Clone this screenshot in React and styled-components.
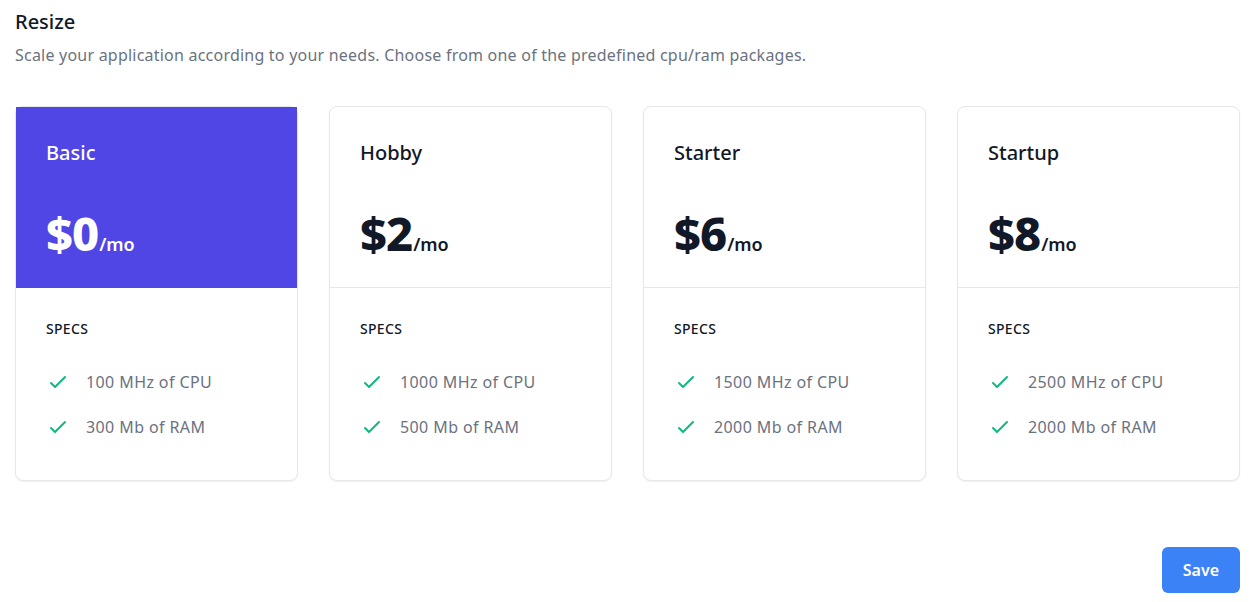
import React from 'react';
import styled, { createGlobalStyle } from 'styled-components';

const GlobalStyle = createGlobalStyle`
    * { box-sizing: border-box; }
    body {
        margin: 0;
        background: #ffffff;
        font-family: "Noto Sans", "Open Sans", Arial, sans-serif;
        color: #111827;
    }
`;

const Page = styled.div`
    padding: 6px 18px 10px 15px;
`;

const Title = styled.h2`
    margin: 0;
    font-size: 20px;
    line-height: 32px;
    font-weight: 500;
    color: #111827;
`;

const Subtitle = styled.p`
    margin: 2px 0 0;
    font-size: 16px;
    line-height: 30px;
    letter-spacing: 0.22px;
    color: #6b7280;
`;

const Plans = styled.div`
    display: grid;
    grid-template-columns: repeat(4, 1fr);
    gap: 31px;
    margin-top: 36px;
`;

const Card = styled.div`
    border: 1px solid #e5e7eb;
    border-radius: 8px;
    background: #fff;
    box-shadow: 0 1px 2px rgba(0, 0, 0, 0.06);
    display: flex;
    flex-direction: column;
`;

const Header = styled.div`
    padding: 32px 30px 30px;
    height: 181px;
    background: ${(p) => (p.$active ? '#4f46e5' : 'transparent')};
    color: ${(p) => (p.$active ? '#ffffff' : '#111827')};
    border-bottom: 1px solid ${(p) => (p.$active ? '#4f46e5' : '#e5e7eb')};
    display: flex;
    flex-direction: column;
    justify-content: space-between;
`;

const PlanName = styled.h3`
    margin: 0;
    font-size: 20px;
    line-height: 28px;
    font-weight: 500;
`;

const Price = styled.p`
    margin: 0;
    display: flex;
    align-items: baseline;
    line-height: 1;
`;

const Amount = styled.span`
    font-size: 47px;
    font-weight: 800;
    letter-spacing: -1px;
`;

const Per = styled.span`
    font-size: 18px;
    font-weight: 600;
    margin-left: 1px;
`;

const Body = styled.div`
    padding: 31px 30px 41px;
`;

const SpecsLabel = styled.h4`
    margin: 0;
    font-size: 14px;
    line-height: 20px;
    font-weight: 500;
    letter-spacing: 0.3px;
    text-transform: uppercase;
    color: #111827;
`;

const FeatureList = styled.ul`
    list-style: none;
    margin: 31px 0 0;
    padding: 0;
    display: flex;
    flex-direction: column;
    gap: 21px;
`;

const Feature = styled.li`
    display: flex;
    align-items: center;
    gap: 16px;
    font-size: 16px;
    line-height: 24px;
    letter-spacing: 0.4px;
    color: #6b7280;
`;

const Footer = styled.div`
    display: flex;
    justify-content: flex-end;
    margin-top: 66px;
`;

const SaveButton = styled.button`
    border: none;
    border-radius: 6px;
    background: #3b82f6;
    color: #fff;
    font-family: inherit;
    font-size: 16px;
    font-weight: 600;
    height: 46px;
    padding: 0 21px;
    cursor: pointer;
`;

const Check = () => (
    <svg width="24" height="24" viewBox="0 0 24 24" fill="none" stroke="#10b981" strokeWidth="2" strokeLinecap="round" strokeLinejoin="round">
        <path d="M5 13l4 4L19 7" />
    </svg>
);

const plans = [
    { name: 'Basic', price: 0, cpu: 100, ram: 300, active: true },
    { name: 'Hobby', price: 2, cpu: 1000, ram: 500 },
    { name: 'Starter', price: 6, cpu: 1500, ram: 2000 },
    { name: 'Startup', price: 8, cpu: 2500, ram: 2000 },
];

function App() {
    return (
        <Page>
            <GlobalStyle />
            <Title>Resize</Title>
            <Subtitle>Scale your application according to your needs. Choose from one of the predefined cpu/ram packages.</Subtitle>
            <Plans>
                {plans.map((plan) => (
                    <Card key={plan.name}>
                        <Header $active={plan.active}>
                            <PlanName>{plan.name}</PlanName>
                            <Price>
                                <Amount>${plan.price}</Amount>
                                <Per>/mo</Per>
                            </Price>
                        </Header>
                        <Body>
                            <SpecsLabel>Specs</SpecsLabel>
                            <FeatureList>
                                <Feature>
                                    <Check />
                                    {plan.cpu} MHz of CPU
                                </Feature>
                                <Feature>
                                    <Check />
                                    {plan.ram} Mb of RAM
                                </Feature>
                            </FeatureList>
                        </Body>
                    </Card>
                ))}
            </Plans>
            <Footer>
                <SaveButton>Save</SaveButton>
            </Footer>
        </Page>
    );
}

export default App;
